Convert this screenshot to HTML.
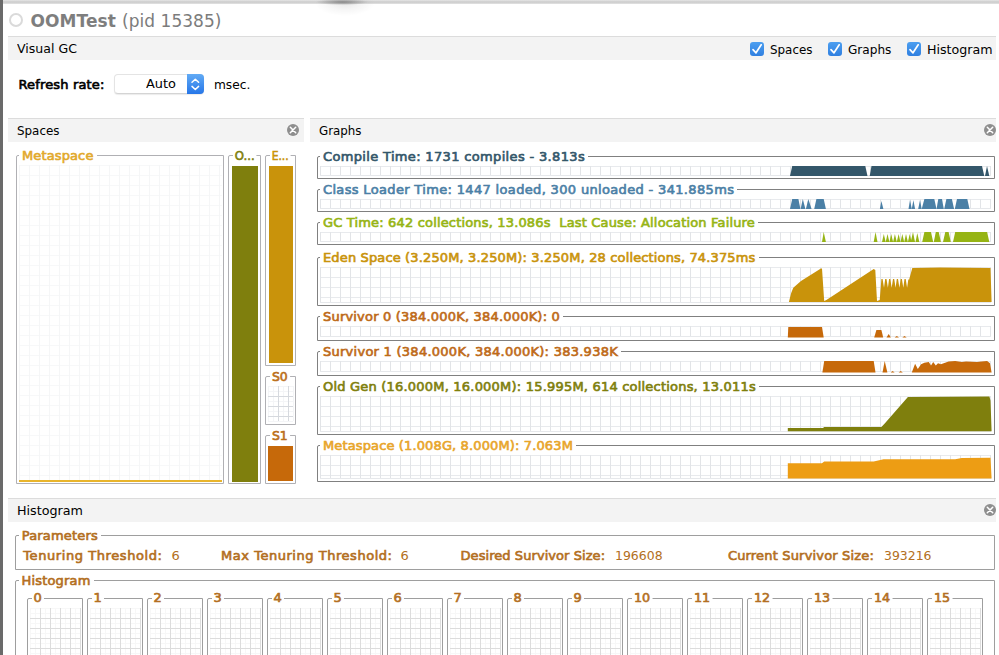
<!DOCTYPE html>
<html lang="en">
<head>
<meta charset="utf-8">
<title>VisualVM - Visual GC</title>
<style>
html,body{margin:0;padding:0;background:#fff;}
body{width:999px;height:655px;overflow:hidden;position:relative;font-family:"DejaVu Sans", "Liberation Sans", sans-serif;font-size:13px;color:#000;}
.abs{position:absolute;}
.t{position:absolute;white-space:nowrap;line-height:16px;height:16px;}
.b{font-weight:normal;-webkit-text-stroke:0.65px currentColor;}
.bb{font-weight:bold;}
.bar{position:absolute;background:#f3f3f3;border-top:1px solid #dcdcdc;height:23px;}
.fs{position:absolute;border:1px solid #808080;box-sizing:border-box;border-radius:2px 0 0 0;}
.lg{background:#fff;}
.grid{position:absolute;background-color:#fff;
 background-image:linear-gradient(to right,#e2e4e7 1px,transparent 1px),linear-gradient(to bottom,#e8eaed 1px,transparent 1px);
 background-size:10px 10px;}
.cb{position:absolute;width:14px;height:14px;border-radius:3px;background:linear-gradient(#4d9ff0,#2f7fe0);}
.close{position:absolute;width:12px;height:12px;border-radius:6px;background:#8e8e8e;}
svg{position:absolute;overflow:visible;}
</style>
</head>
<body>
<div class="abs" style="left:0;top:0;width:999px;height:4px;background:linear-gradient(#ececec 0,#d3d3d3 25%,#d0d0d0 70%,#e6e6e6 100%)"></div>
<div class="abs" style="left:290px;top:0;width:110px;height:18px;background:radial-gradient(ellipse 26px 3.2px at 52px 2px,rgba(90,90,90,.52),rgba(100,100,100,.26) 55%,rgba(128,128,128,0) 100%),radial-gradient(ellipse 30px 13px at 55px 3px,rgba(0,0,0,.09),rgba(0,0,0,.04) 50%,rgba(0,0,0,0) 100%)"></div>
<div class="abs" style="left:0;top:0;width:3px;height:655px;background:#6a6a6a"></div>
<div class="abs" style="left:8.5px;top:12.7px;width:10px;height:10px;border:2.6px solid #dadada;border-radius:50%"></div>
<div id="t1" class="t bb" style="left:30.50px;top:9.37px;color:#7e7e7e;font-size:17px;line-height:24px;height:24px;letter-spacing:0.080px;">OOMTest</div>
<div id="t2" class="t" style="left:122.00px;top:9.37px;color:#7c7c7c;font-size:17px;line-height:24px;height:24px;letter-spacing:0.040px;">(pid 15385)</div>
<div class="bar" style="left:8px;top:36px;width:988px;height:23px"></div>
<div id="t3" class="t" style="left:17.10px;top:41.00px;color:#000;font-size:13px;line-height:16px;height:16px;transform:scaleX(0.9647);transform-origin:0 0;">Visual GC</div>
<div class="cb" style="left:750px;top:42.2px"><svg width="14" height="14" viewBox="0 0 14 14"><path d="M3 7.6 L6 10.8 L11.2 2.8" fill="none" stroke="#fff" stroke-width="1.7" stroke-linecap="round" stroke-linejoin="round"/></svg></div>
<div id="t4" class="t" style="left:769.70px;top:42.00px;color:#000;font-size:13px;line-height:16px;height:16px;transform:scaleX(0.9161);transform-origin:0 0;">Spaces</div>
<div class="cb" style="left:828px;top:42.2px"><svg width="14" height="14" viewBox="0 0 14 14"><path d="M3 7.6 L6 10.8 L11.2 2.8" fill="none" stroke="#fff" stroke-width="1.7" stroke-linecap="round" stroke-linejoin="round"/></svg></div>
<div id="t5" class="t" style="left:847.80px;top:42.00px;color:#000;font-size:13px;line-height:16px;height:16px;transform:scaleX(0.9302);transform-origin:0 0;">Graphs</div>
<div class="cb" style="left:907px;top:42.2px"><svg width="14" height="14" viewBox="0 0 14 14"><path d="M3 7.6 L6 10.8 L11.2 2.8" fill="none" stroke="#fff" stroke-width="1.7" stroke-linecap="round" stroke-linejoin="round"/></svg></div>
<div id="t6" class="t" style="left:927.20px;top:42.00px;color:#000;font-size:13px;line-height:16px;height:16px;transform:scaleX(0.9728);transform-origin:0 0;">Histogram</div>
<div id="t7" class="t b" style="left:18.50px;top:77.00px;color:#000;font-size:13px;line-height:16px;height:16px;letter-spacing:0.153px;">Refresh rate:</div>
<div class="abs" style="left:114px;top:74px;width:90px;height:20px;box-sizing:border-box;border:1px solid #e4e4e4;border-bottom-color:#d4d4d4;border-radius:4px;background:#fff;box-shadow:0 1px 1px rgba(0,0,0,.08)"></div>
<div class="abs" style="left:187px;top:74px;width:17px;height:20px;border-radius:0 4px 4px 0;background:linear-gradient(#62abf5,#2676e8)"><svg width="17" height="20" viewBox="0 0 17 20"><path d="M5 8.3 L8.3 5.2 L11.6 8.3 M5 12.4 L8.3 15.5 L11.6 12.4" fill="none" stroke="#fff" stroke-width="1.5" stroke-linecap="round" stroke-linejoin="round"/></svg></div>
<div id="t8" class="t" style="left:146.10px;top:76.25px;color:#000;font-size:13px;line-height:16px;height:16px;transform:scaleX(0.9905);transform-origin:0 0;">Auto</div>
<div id="t9" class="t" style="left:214.20px;top:76.75px;color:#000;font-size:13px;line-height:16px;height:16px;transform:scaleX(0.9375);transform-origin:0 0;">msec.</div>
<div class="bar" style="left:8px;top:118px;width:296px"></div>
<div id="t10" class="t" style="left:17.00px;top:123.00px;color:#000;font-size:13px;line-height:16px;height:16px;transform:scaleX(0.9161);transform-origin:0 0;">Spaces</div>
<div class="close" style="left:287px;top:124px"><svg width="12" height="12" viewBox="0 0 12 12"><path d="M3.3 3.3 L8.7 8.7 M8.7 3.3 L3.3 8.7" stroke="#fff" stroke-width="1.5" stroke-linecap="round"/></svg></div>
<div class="bar" style="left:310px;top:118px;width:686px"></div>
<div id="t11" class="t" style="left:319.00px;top:123.00px;color:#000;font-size:13px;line-height:16px;height:16px;transform:scaleX(0.9109);transform-origin:0 0;">Graphs</div>
<div class="close" style="left:984px;top:124px"><svg width="12" height="12" viewBox="0 0 12 12"><path d="M3.3 3.3 L8.7 8.7 M8.7 3.3 L3.3 8.7" stroke="#fff" stroke-width="1.5" stroke-linecap="round"/></svg></div>
<div class="bar" style="left:8px;top:498px;width:988px"></div>
<div id="t12" class="t" style="left:17.00px;top:503.00px;color:#000;font-size:13px;line-height:16px;height:16px;transform:scaleX(0.9787);transform-origin:0 0;">Histogram</div>
<div class="close" style="left:984px;top:504px"><svg width="12" height="12" viewBox="0 0 12 12"><path d="M3.3 3.3 L8.7 8.7 M8.7 3.3 L3.3 8.7" stroke="#fff" stroke-width="1.5" stroke-linecap="round"/></svg></div>
<div class="fs" style="left:16px;top:155px;width:208px;height:329px;border-color:#b0b0b4;"><div class="grid" style="left:2px;top:9px;width:203px;height:317px;opacity:.32"></div><div class="abs" style="left:2px;top:324px;width:203px;height:2px;background:#e9b52c"></div></div>
<div id="t13" class="t b lg" style="left:19.00px;top:148.00px;color:#e2a92c;font-size:13px;line-height:16px;height:16px;letter-spacing:0.120px;padding:0 3px 0 3px;">Metaspace</div>
<div class="fs" style="left:228px;top:155px;width:33px;height:329px;border-color:#b0b0b4;"><div class="abs" style="left:3px;top:10px;width:25.5px;height:316px;background:#7f7f0d"></div></div>
<div id="t14" class="t b lg" style="left:231.30px;top:148.00px;color:#7f7f0d;font-size:13px;line-height:16px;height:16px;transform:scaleX(0.9001);transform-origin:0 0;padding:0 3px 0 3px;padding:0 2px;margin-left:1.5px;">O...</div>
<div class="fs" style="left:265px;top:155px;width:31px;height:211px;border-color:#b0b0b4;"><div class="abs" style="left:2.7px;top:10px;width:24.5px;height:196.5px;background:#c9930b"></div></div>
<div id="t15" class="t b lg" style="left:268.50px;top:148.00px;color:#c9930b;font-size:13px;line-height:16px;height:16px;transform:scaleX(0.8242);transform-origin:0 0;padding:0 3px 0 3px;padding:0 2px;margin-left:1.5px;">E...</div>
<div class="fs" style="left:265px;top:376px;width:31px;height:49px;border-color:#b0b0b4;"></div>
<div id="t16" class="t b lg" style="left:268.20px;top:368.60px;color:#bb6f1a;font-size:13px;line-height:16px;height:16px;transform:scaleX(0.9558);transform-origin:0 0;padding:0 3px 0 3px;padding:0 2px;margin-left:1.5px;">S0</div>
<div class="fs" style="left:265px;top:435px;width:31px;height:49px;border-color:#b0b0b4;"><div class="abs" style="left:2.3px;top:10px;width:24.7px;height:34.5px;background:#c6690a"></div></div>
<div id="t17" class="t b lg" style="left:268.20px;top:427.50px;color:#bb6f1a;font-size:13px;line-height:16px;height:16px;transform:scaleX(0.9558);transform-origin:0 0;padding:0 3px 0 3px;padding:0 2px;margin-left:1.5px;">S1</div>
<div class="fs" style="left:317px;top:156px;width:678px;height:23px;"><div class="grid" style="left:2px;top:9px;width:671px;height:9px;border-bottom:1px solid #e6e8eb"></div></div>
<div id="t18" class="t b lg" style="left:320.00px;top:148.75px;color:#34576a;font-size:13px;line-height:16px;height:16px;letter-spacing:0.339px;padding:0 3px 0 3px;">Compile Time: 1731 compiles - 3.813s</div>
<div class="fs" style="left:317px;top:189px;width:678px;height:23px;"><div class="grid" style="left:2px;top:9px;width:671px;height:9px;border-bottom:1px solid #e6e8eb"></div></div>
<div id="t19" class="t b lg" style="left:320.00px;top:181.75px;color:#4b80a6;font-size:13px;line-height:16px;height:16px;letter-spacing:0.336px;padding:0 3px 0 3px;">Class Loader Time: 1447 loaded, 300 unloaded - 341.885ms</div>
<div class="fs" style="left:317px;top:222px;width:678px;height:23px;"><div class="grid" style="left:2px;top:9px;width:671px;height:9px;border-bottom:1px solid #e6e8eb"></div></div>
<div id="t20" class="t b lg" style="left:320.00px;top:214.75px;color:#96b414;font-size:13px;line-height:16px;height:16px;letter-spacing:0.165px;padding:0 3px 0 3px;">GC Time: 642 collections, 13.086s&nbsp; Last Cause: Allocation Failure</div>
<div class="fs" style="left:317px;top:257px;width:678px;height:49px;"><div class="grid" style="left:2px;top:9px;width:671px;height:35px;border-bottom:1px solid #e6e8eb"></div></div>
<div id="t21" class="t b lg" style="left:320.00px;top:250.00px;color:#c9930b;font-size:13px;line-height:16px;height:16px;letter-spacing:0.138px;padding:0 3px 0 3px;">Eden Space (3.250M, 3.250M): 3.250M, 28 collections, 74.375ms</div>
<div class="fs" style="left:317px;top:316px;width:678px;height:25px;"><div class="grid" style="left:2px;top:9px;width:671px;height:10px;border-bottom:1px solid #e6e8eb"></div></div>
<div id="t22" class="t b lg" style="left:320.00px;top:308.75px;color:#be6a18;font-size:13px;line-height:16px;height:16px;letter-spacing:0.193px;padding:0 3px 0 3px;">Survivor 0 (384.000K, 384.000K): 0</div>
<div class="fs" style="left:317px;top:351px;width:678px;height:25px;"><div class="grid" style="left:2px;top:9px;width:671px;height:10px;border-bottom:1px solid #e6e8eb"></div></div>
<div id="t23" class="t b lg" style="left:320.00px;top:343.50px;color:#be6a18;font-size:13px;line-height:16px;height:16px;letter-spacing:0.257px;padding:0 3px 0 3px;">Survivor 1 (384.000K, 384.000K): 383.938K</div>
<div class="fs" style="left:317px;top:386px;width:678px;height:49px;"><div class="grid" style="left:2px;top:9px;width:671px;height:35px;border-bottom:1px solid #e6e8eb"></div></div>
<div id="t24" class="t b lg" style="left:320.00px;top:378.50px;color:#7f7f0d;font-size:13px;line-height:16px;height:16px;letter-spacing:0.203px;padding:0 3px 0 3px;">Old Gen (16.000M, 16.000M): 15.995M, 614 collections, 13.011s</div>
<div class="fs" style="left:317px;top:445px;width:678px;height:37px;"><div class="grid" style="left:2px;top:9px;width:671px;height:23px;border-bottom:1px solid #e6e8eb"></div></div>
<div id="t25" class="t b lg" style="left:320.00px;top:437.50px;color:#e8a52a;font-size:13px;line-height:16px;height:16px;letter-spacing:0.129px;padding:0 3px 0 3px;">Metaspace (1.008G, 8.000M): 7.063M</div>
<svg style="left:0;top:0" width="999" height="655"><polygon points="790.0,176.0 792.2,166.0 865.3,166.0 867.5,176.0" fill="#34576a"/><polygon points="869.7,176.0 871.5,166.0 982.0,166.0 984.3,176.0" fill="#34576a"/><polygon points="985.0,176.0 987.0,166.0 989.3,176.0" fill="#34576a"/><polygon points="790.0,209.0 792.2,199.0 798.4,199.0 800.4,209.0" fill="#4b80a6"/><polygon points="800.6,209.0 802.8,199.0 805.4,209.0" fill="#4b80a6"/><polygon points="805.9,209.0 808.3,199.0 811.6,209.0" fill="#4b80a6"/><polygon points="814.2,209.0 816.4,199.0 823.7,199.0 825.9,209.0" fill="#4b80a6"/><polygon points="879.9,209.0 881.4,201.0 883.4,209.0" fill="#4b80a6"/><polygon points="908.5,209.0 910.0,200.0 911.8,209.0" fill="#4b80a6"/><polygon points="911.8,209.0 913.4,200.0 915.1,209.0" fill="#4b80a6"/><polygon points="918.2,209.0 920.0,200.0 921.7,209.0" fill="#4b80a6"/><polygon points="921.7,209.0 924.4,199.0 934.3,199.0 936.5,209.0" fill="#4b80a6"/><polygon points="936.5,209.0 938.3,199.0 942.0,199.0 943.8,209.0" fill="#4b80a6"/><polygon points="944.2,209.0 946.4,199.0 951.9,199.0 954.1,209.0" fill="#4b80a6"/><polygon points="954.8,209.0 957.0,199.0 967.3,199.0 969.5,209.0" fill="#4b80a6"/><polygon points="822.0,242.0 823.7,232.0 825.9,242.0" fill="#96b414"/><polygon points="873.7,242.0 875.5,232.0 877.5,242.0" fill="#96b414"/><polygon points="882.0,242.0 883.8,234.0 885.7,242.0" fill="#96b414"/><polygon points="885.7,242.0 887.5,234.0 889.4,242.0" fill="#96b414"/><polygon points="889.4,242.0 891.2,234.0 893.1,242.0" fill="#96b414"/><polygon points="893.1,242.0 894.9,234.0 896.8,242.0" fill="#96b414"/><polygon points="896.8,242.0 898.6,234.0 900.5,242.0" fill="#96b414"/><polygon points="900.5,242.0 902.3,234.0 904.2,242.0" fill="#96b414"/><polygon points="904.2,242.0 906.0,234.0 907.9,242.0" fill="#96b414"/><polygon points="907.9,242.0 909.7,234.0 911.6,242.0" fill="#96b414"/><polygon points="910.7,242.0 913.0,232.0 915.0,242.0" fill="#96b414"/><polygon points="915.5,242.0 917.3,233.0 919.3,242.0" fill="#96b414"/><polygon points="922.2,242.0 924.4,232.0 931.0,232.0 933.2,242.0" fill="#96b414"/><polygon points="933.8,242.0 935.8,232.0 938.7,232.0 940.9,242.0" fill="#96b414"/><polygon points="943.0,242.0 945.3,232.0 948.6,232.0 950.8,242.0" fill="#96b414"/><polygon points="953.0,242.0 955.2,232.0 987.1,232.0 989.3,242.0" fill="#96b414"/><polygon points="788.9,302.0 791.1,293.2 793.3,287.7 801.0,281.1 820.9,268.6 822.0,268.6 824.2,301.0 826.4,299.9 873.7,269.0 875.3,270.0 877.0,301.0 879.7,299.9 881.4,278.9 882.6,278.9 884.0,287.7 885.2,278.9 886.5,278.9 887.9,287.7 889.1,278.9 890.3,278.9 891.7,287.7 893.0,278.9 894.2,278.9 895.6,287.7 896.8,278.9 898.0,278.9 899.4,287.7 900.7,278.9 901.9,278.9 903.3,287.7 904.5,278.9 905.7,278.9 907.1,287.7 908.4,278.9 909.0,280.0 912.3,267.9 940.0,267.5 990.5,267.9 991.6,302.0" fill="#c9930b"/><polygon points="787.8,337.5 788.3,327.0 822.0,327.0 823.7,337.5" fill="#c6690a"/><polygon points="874.2,337.5 876.4,330.0 881.4,330.0 883.2,337.5" fill="#c6690a"/><polygon points="886.5,337.5 888.7,333.9 890.9,337.5" fill="#c6690a"/><polygon points="894.6,337.5 896.8,336.0 899.0,337.5" fill="#c6690a"/><polygon points="902.3,337.5 904.5,336.0 906.7,337.5" fill="#c6690a"/><polygon points="822.4,372.5 824.2,361.0 873.7,361.0 875.5,372.5" fill="#c6690a"/><polygon points="882.5,372.5 884.7,361.0 887.4,372.5" fill="#c6690a"/><polygon points="890.7,372.5 892.6,370.9 894.6,372.5" fill="#c6690a"/><polygon points="898.6,372.5 900.7,370.9 902.8,372.5" fill="#c6690a"/><polygon points="911.8,372.5 915.1,363.8 917.8,369.1 921.1,364.3 924.4,362.7 928.8,362.0 931.0,365.4 933.2,362.0 935.8,365.4 938.0,363.2 940.9,364.3 948.6,361.4 955.2,361.0 961.8,362.0 966.0,361.4 977.0,362.0 981.5,361.4 987.1,361.0 990.0,363.2 991.6,372.5" fill="#c6690a"/><polygon points="787.8,431.3 787.8,428.0 823.0,428.0 824.2,426.9 881.4,426.9 884.7,423.5 907.9,397.1 989.4,396.5 990.5,400.4 991.6,431.3" fill="#7f7f0d"/><polygon points="787.8,478.6 787.8,463.2 822.0,463.2 824.2,461.4 873.7,461.4 883.6,459.2 955.2,459.2 961.8,458.1 990.5,457.7 991.6,478.6" fill="#ed9d14"/></svg>
<div class="fs" style="left:15px;top:535px;width:980px;height:35px;border-color:#9e9e9e;"></div>
<div id="t26" class="t b lg" style="left:18.70px;top:527.50px;color:#b36f22;font-size:13px;line-height:16px;height:16px;letter-spacing:0.188px;padding:0 3px 0 3px;">Parameters</div>
<div id="t27" class="t b" style="left:23.25px;top:548.40px;color:#b36f22;font-size:13px;line-height:16px;height:16px;letter-spacing:0.579px;">Tenuring Threshold:</div>
<div id="t28" class="t" style="left:171.50px;top:548.40px;color:#b36f22;font-size:13px;line-height:16px;height:16px;">6</div>
<div id="t29" class="t b" style="left:221.00px;top:548.40px;color:#b36f22;font-size:13px;line-height:16px;height:16px;letter-spacing:0.533px;">Max Tenuring Threshold:</div>
<div id="t30" class="t" style="left:400.50px;top:548.40px;color:#b36f22;font-size:13px;line-height:16px;height:16px;">6</div>
<div id="t31" class="t b" style="left:460.50px;top:548.40px;color:#b36f22;font-size:13px;line-height:16px;height:16px;letter-spacing:0.065px;">Desired Survivor Size:</div>
<div id="t32" class="t" style="left:615.20px;top:548.40px;color:#b36f22;font-size:13px;line-height:16px;height:16px;transform:scaleX(0.9589);transform-origin:0 0;">196608</div>
<div id="t33" class="t b" style="left:727.90px;top:548.40px;color:#b36f22;font-size:13px;line-height:16px;height:16px;letter-spacing:0.177px;">Current Survivor Size:</div>
<div id="t34" class="t" style="left:883.50px;top:548.40px;color:#b36f22;font-size:13px;line-height:16px;height:16px;transform:scaleX(0.9569);transform-origin:0 0;">393216</div>
<div class="fs" style="left:15px;top:580px;width:980px;height:90px;border-color:#9e9e9e;"></div>
<div id="t35" class="t b lg" style="left:18.50px;top:572.60px;color:#b36f22;font-size:13px;line-height:16px;height:16px;letter-spacing:0.174px;padding:0 3px 0 3px;">Histogram</div>
<div class="fs" style="left:27px;top:598px;width:56px;height:70px;border-color:#9e9e9e;"></div>
<div id="t36" class="t b lg" style="left:30.50px;top:590.40px;color:#b36f22;font-size:13px;line-height:16px;height:16px;padding:0 3px 0 3px;padding:0 2px;margin-left:1px;">0</div>
<div class="fs" style="left:87px;top:598px;width:56px;height:70px;border-color:#9e9e9e;"></div>
<div id="t37" class="t b lg" style="left:90.50px;top:590.40px;color:#b36f22;font-size:13px;line-height:16px;height:16px;padding:0 3px 0 3px;padding:0 2px;margin-left:1px;">1</div>
<div class="fs" style="left:147px;top:598px;width:56px;height:70px;border-color:#9e9e9e;"></div>
<div id="t38" class="t b lg" style="left:150.50px;top:590.40px;color:#b36f22;font-size:13px;line-height:16px;height:16px;padding:0 3px 0 3px;padding:0 2px;margin-left:1px;">2</div>
<div class="fs" style="left:207px;top:598px;width:56px;height:70px;border-color:#9e9e9e;"></div>
<div id="t39" class="t b lg" style="left:210.50px;top:590.40px;color:#b36f22;font-size:13px;line-height:16px;height:16px;padding:0 3px 0 3px;padding:0 2px;margin-left:1px;">3</div>
<div class="fs" style="left:267px;top:598px;width:56px;height:70px;border-color:#9e9e9e;"></div>
<div id="t40" class="t b lg" style="left:270.50px;top:590.40px;color:#b36f22;font-size:13px;line-height:16px;height:16px;padding:0 3px 0 3px;padding:0 2px;margin-left:1px;">4</div>
<div class="fs" style="left:327px;top:598px;width:56px;height:70px;border-color:#9e9e9e;"></div>
<div id="t41" class="t b lg" style="left:330.50px;top:590.40px;color:#b36f22;font-size:13px;line-height:16px;height:16px;padding:0 3px 0 3px;padding:0 2px;margin-left:1px;">5</div>
<div class="fs" style="left:387px;top:598px;width:56px;height:70px;border-color:#9e9e9e;"></div>
<div id="t42" class="t b lg" style="left:390.50px;top:590.40px;color:#b36f22;font-size:13px;line-height:16px;height:16px;padding:0 3px 0 3px;padding:0 2px;margin-left:1px;">6</div>
<div class="fs" style="left:447px;top:598px;width:56px;height:70px;border-color:#9e9e9e;"></div>
<div id="t43" class="t b lg" style="left:450.50px;top:590.40px;color:#b36f22;font-size:13px;line-height:16px;height:16px;padding:0 3px 0 3px;padding:0 2px;margin-left:1px;">7</div>
<div class="fs" style="left:507px;top:598px;width:56px;height:70px;border-color:#9e9e9e;"></div>
<div id="t44" class="t b lg" style="left:510.50px;top:590.40px;color:#b36f22;font-size:13px;line-height:16px;height:16px;padding:0 3px 0 3px;padding:0 2px;margin-left:1px;">8</div>
<div class="fs" style="left:567px;top:598px;width:56px;height:70px;border-color:#9e9e9e;"></div>
<div id="t45" class="t b lg" style="left:570.50px;top:590.40px;color:#b36f22;font-size:13px;line-height:16px;height:16px;padding:0 3px 0 3px;padding:0 2px;margin-left:1px;">9</div>
<div class="fs" style="left:627px;top:598px;width:56px;height:70px;border-color:#9e9e9e;"></div>
<div id="t46" class="t b lg" style="left:630.50px;top:590.40px;color:#b36f22;font-size:13px;line-height:16px;height:16px;transform:scaleX(0.9790);transform-origin:0 0;padding:0 3px 0 3px;padding:0 2px;margin-left:1px;">10</div>
<div class="fs" style="left:687px;top:598px;width:56px;height:70px;border-color:#9e9e9e;"></div>
<div id="t47" class="t b lg" style="left:690.50px;top:590.40px;color:#b36f22;font-size:13px;line-height:16px;height:16px;transform:scaleX(0.9790);transform-origin:0 0;padding:0 3px 0 3px;padding:0 2px;margin-left:1px;">11</div>
<div class="fs" style="left:747px;top:598px;width:56px;height:70px;border-color:#9e9e9e;"></div>
<div id="t48" class="t b lg" style="left:750.50px;top:590.40px;color:#b36f22;font-size:13px;line-height:16px;height:16px;transform:scaleX(0.9790);transform-origin:0 0;padding:0 3px 0 3px;padding:0 2px;margin-left:1px;">12</div>
<div class="fs" style="left:807px;top:598px;width:56px;height:70px;border-color:#9e9e9e;"></div>
<div id="t49" class="t b lg" style="left:810.50px;top:590.40px;color:#b36f22;font-size:13px;line-height:16px;height:16px;transform:scaleX(0.9790);transform-origin:0 0;padding:0 3px 0 3px;padding:0 2px;margin-left:1px;">13</div>
<div class="fs" style="left:867px;top:598px;width:56px;height:70px;border-color:#9e9e9e;"></div>
<div id="t50" class="t b lg" style="left:870.50px;top:590.40px;color:#b36f22;font-size:13px;line-height:16px;height:16px;transform:scaleX(0.9790);transform-origin:0 0;padding:0 3px 0 3px;padding:0 2px;margin-left:1px;">14</div>
<div class="fs" style="left:927px;top:598px;width:56px;height:70px;border-color:#9e9e9e;"></div>
<div id="t51" class="t b lg" style="left:930.50px;top:590.40px;color:#b36f22;font-size:13px;line-height:16px;height:16px;transform:scaleX(0.9790);transform-origin:0 0;padding:0 3px 0 3px;padding:0 2px;margin-left:1px;">15</div>
<svg style="left:0;top:0" width="999" height="655" fill="none" shape-rendering="crispEdges"><path stroke="#f7f7f7" d="M30.5 608V655M35.5 608V655M45.5 608V655M55.5 608V655M65.5 608V655M75.5 608V655M30 608.5H80M30 613.5H80M30 623.5H80M30 633.5H80M30 643.5H80M30 653.5H80M90.5 608V655M95.5 608V655M105.5 608V655M115.5 608V655M125.5 608V655M135.5 608V655M90 608.5H140M90 613.5H140M90 623.5H140M90 633.5H140M90 643.5H140M90 653.5H140M150.5 608V655M155.5 608V655M165.5 608V655M175.5 608V655M185.5 608V655M195.5 608V655M150 608.5H200M150 613.5H200M150 623.5H200M150 633.5H200M150 643.5H200M150 653.5H200M210.5 608V655M215.5 608V655M225.5 608V655M235.5 608V655M245.5 608V655M255.5 608V655M210 608.5H260M210 613.5H260M210 623.5H260M210 633.5H260M210 643.5H260M210 653.5H260M270.5 608V655M275.5 608V655M285.5 608V655M295.5 608V655M305.5 608V655M315.5 608V655M270 608.5H320M270 613.5H320M270 623.5H320M270 633.5H320M270 643.5H320M270 653.5H320M330.5 608V655M335.5 608V655M345.5 608V655M355.5 608V655M365.5 608V655M375.5 608V655M330 608.5H380M330 613.5H380M330 623.5H380M330 633.5H380M330 643.5H380M330 653.5H380M390.5 608V655M395.5 608V655M405.5 608V655M415.5 608V655M425.5 608V655M435.5 608V655M390 608.5H440M390 613.5H440M390 623.5H440M390 633.5H440M390 643.5H440M390 653.5H440M450.5 608V655M455.5 608V655M465.5 608V655M475.5 608V655M485.5 608V655M495.5 608V655M450 608.5H500M450 613.5H500M450 623.5H500M450 633.5H500M450 643.5H500M450 653.5H500M510.5 608V655M515.5 608V655M525.5 608V655M535.5 608V655M545.5 608V655M555.5 608V655M510 608.5H560M510 613.5H560M510 623.5H560M510 633.5H560M510 643.5H560M510 653.5H560M570.5 608V655M575.5 608V655M585.5 608V655M595.5 608V655M605.5 608V655M615.5 608V655M570 608.5H620M570 613.5H620M570 623.5H620M570 633.5H620M570 643.5H620M570 653.5H620M630.5 608V655M635.5 608V655M645.5 608V655M655.5 608V655M665.5 608V655M675.5 608V655M630 608.5H680M630 613.5H680M630 623.5H680M630 633.5H680M630 643.5H680M630 653.5H680M690.5 608V655M695.5 608V655M705.5 608V655M715.5 608V655M725.5 608V655M735.5 608V655M690 608.5H740M690 613.5H740M690 623.5H740M690 633.5H740M690 643.5H740M690 653.5H740M750.5 608V655M755.5 608V655M765.5 608V655M775.5 608V655M785.5 608V655M795.5 608V655M750 608.5H800M750 613.5H800M750 623.5H800M750 633.5H800M750 643.5H800M750 653.5H800M810.5 608V655M815.5 608V655M825.5 608V655M835.5 608V655M845.5 608V655M855.5 608V655M810 608.5H860M810 613.5H860M810 623.5H860M810 633.5H860M810 643.5H860M810 653.5H860M870.5 608V655M875.5 608V655M885.5 608V655M895.5 608V655M905.5 608V655M915.5 608V655M870 608.5H920M870 613.5H920M870 623.5H920M870 633.5H920M870 643.5H920M870 653.5H920M930.5 608V655M935.5 608V655M945.5 608V655M955.5 608V655M965.5 608V655M975.5 608V655M930 608.5H980M930 613.5H980M930 623.5H980M930 633.5H980M930 643.5H980M930 653.5H980"/><path stroke="#dcdcdc" d="M40.5 608V655M50.5 608V655M60.5 608V655M70.5 608V655M80.5 608V655M30 618.5H80M30 628.5H80M30 638.5H80M30 648.5H80M100.5 608V655M110.5 608V655M120.5 608V655M130.5 608V655M140.5 608V655M90 618.5H140M90 628.5H140M90 638.5H140M90 648.5H140M160.5 608V655M170.5 608V655M180.5 608V655M190.5 608V655M200.5 608V655M150 618.5H200M150 628.5H200M150 638.5H200M150 648.5H200M220.5 608V655M230.5 608V655M240.5 608V655M250.5 608V655M260.5 608V655M210 618.5H260M210 628.5H260M210 638.5H260M210 648.5H260M280.5 608V655M290.5 608V655M300.5 608V655M310.5 608V655M320.5 608V655M270 618.5H320M270 628.5H320M270 638.5H320M270 648.5H320M340.5 608V655M350.5 608V655M360.5 608V655M370.5 608V655M380.5 608V655M330 618.5H380M330 628.5H380M330 638.5H380M330 648.5H380M400.5 608V655M410.5 608V655M420.5 608V655M430.5 608V655M440.5 608V655M390 618.5H440M390 628.5H440M390 638.5H440M390 648.5H440M460.5 608V655M470.5 608V655M480.5 608V655M490.5 608V655M500.5 608V655M450 618.5H500M450 628.5H500M450 638.5H500M450 648.5H500M520.5 608V655M530.5 608V655M540.5 608V655M550.5 608V655M560.5 608V655M510 618.5H560M510 628.5H560M510 638.5H560M510 648.5H560M580.5 608V655M590.5 608V655M600.5 608V655M610.5 608V655M620.5 608V655M570 618.5H620M570 628.5H620M570 638.5H620M570 648.5H620M640.5 608V655M650.5 608V655M660.5 608V655M670.5 608V655M680.5 608V655M630 618.5H680M630 628.5H680M630 638.5H680M630 648.5H680M700.5 608V655M710.5 608V655M720.5 608V655M730.5 608V655M740.5 608V655M690 618.5H740M690 628.5H740M690 638.5H740M690 648.5H740M760.5 608V655M770.5 608V655M780.5 608V655M790.5 608V655M800.5 608V655M750 618.5H800M750 628.5H800M750 638.5H800M750 648.5H800M820.5 608V655M830.5 608V655M840.5 608V655M850.5 608V655M860.5 608V655M810 618.5H860M810 628.5H860M810 638.5H860M810 648.5H860M880.5 608V655M890.5 608V655M900.5 608V655M910.5 608V655M920.5 608V655M870 618.5H920M870 628.5H920M870 638.5H920M870 648.5H920M940.5 608V655M950.5 608V655M960.5 608V655M970.5 608V655M980.5 608V655M930 618.5H980M930 628.5H980M930 638.5H980M930 648.5H980"/><path stroke="#f4f5f7" d="M268.5 386V421M273.5 386V421M283.5 386V421M293.5 386V421M268 386.5H293M268 391.5H293M268 401.5H293M268 411.5H293M268 421.5H293"/><path stroke="#d6d9de" d="M278.5 386V421M288.5 386V421M268 396.5H293M268 406.5H293M268 416.5H293"/></svg>
</body>
</html>
